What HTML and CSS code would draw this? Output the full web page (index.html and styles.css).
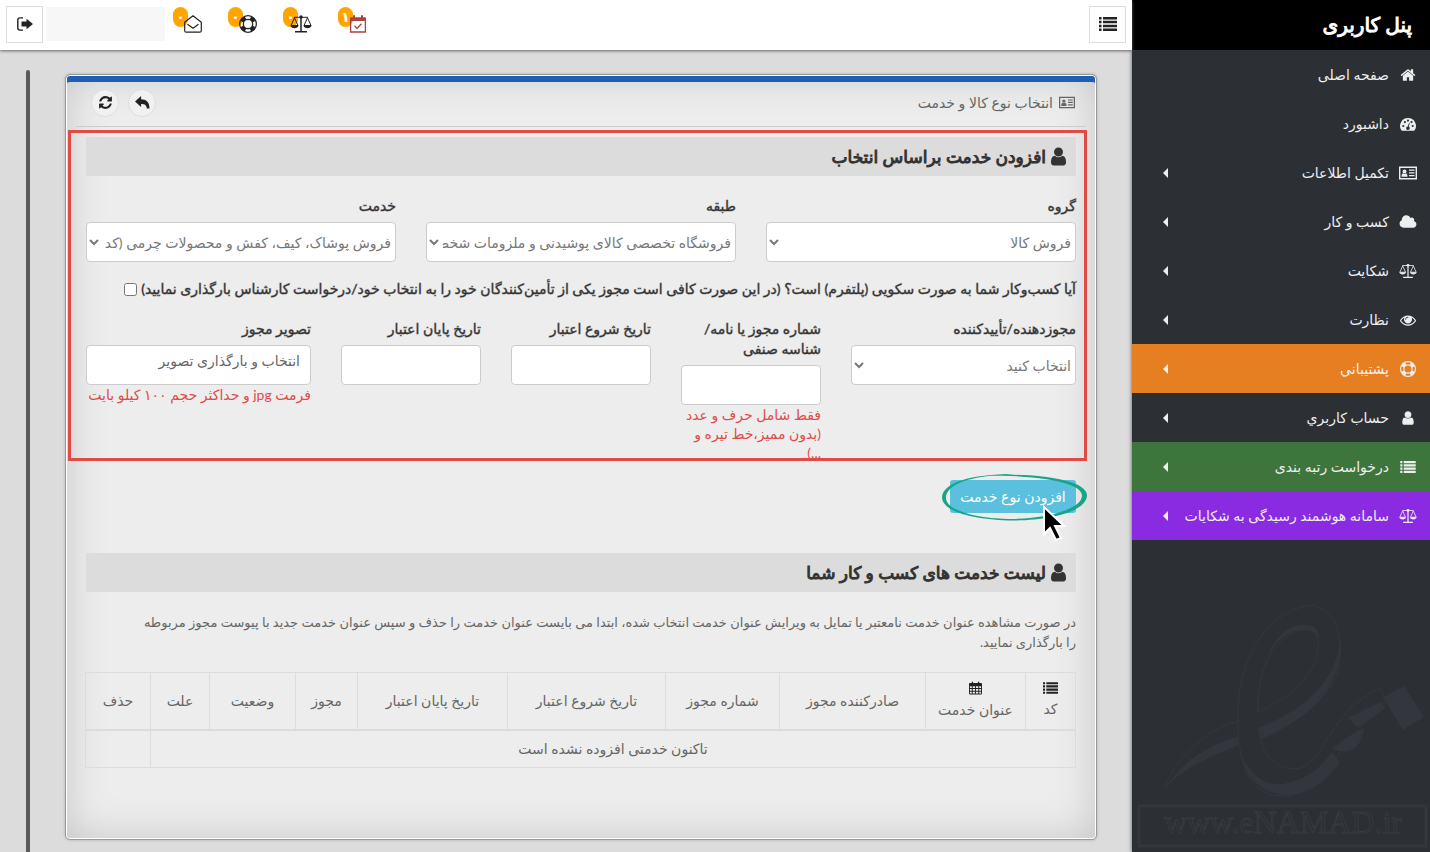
FILE: index.html
```html
<!DOCTYPE html>
<html lang="fa" dir="rtl">
<head>
<meta charset="utf-8">
<title>پنل کاربری</title>
<link rel="stylesheet" href="styles.css">
</head>
<body>
<svg class="sprite" aria-hidden="true">
  <symbol id="home" viewBox="0 0 1792 1792"><path d="M1472 992v480q0 26-19 45t-45 19h-384v-384h-256v384h-384q-26 0-45-19t-19-45v-480q0-1 .5-3t.5-3l575-474 575 474q1 2 1 6zm223-69l-62 74q-8 9-21 11h-3q-13 0-21-7l-692-577-692 577q-12 8-24 7-13-2-21-11l-62-74q-8-10-7-23.5t11-21.5l719-599q32-26 76-26t76 26l244 204v-195q0-14 9-23t23-9h192q14 0 23 9t9 23v408l219 182q10 8 11 21.5t-7 23.5z"/></symbol>
  <symbol id="user" viewBox="0 0 1792 1792"><path d="M1536 1399q0 109-62.5 187t-150.5 78h-854q-88 0-150.5-78t-62.5-187q0-85 8.5-160.5t31.5-152 58.5-131 94-89 134.5-34.5q131 128 313 128t313-128q76 0 134.5 34.5t94 89 58.5 131 31.5 152 8.5 160.5zm-256-887q0 159-112.5 271.5t-271.5 112.5-271.5-112.5-112.5-271.5 112.5-271.5 271.5-112.5 271.5 112.5 112.5 271.5z"/></symbol>
  <symbol id="cloud" viewBox="0 128 2048 1536"><path d="M1984 1152q0 159-112.5 271.5t-271.5 112.5h-1088q-185 0-316.5-131.5t-131.5-316.5q0-132 71-241.5t187-163.5q-2-28-2-43 0-212 150-362t362-150q158 0 286.5 88t187.5 230q70-62 166-62 106 0 181 75t75 181q0 75-41 138 129 30 213 134.5t84 239.5z"/></symbol>
  <symbol id="eye" viewBox="0 0 1792 1792"><path d="M1664 960q-152-236-381-353 61 104 61 225 0 185-131.5 316.5t-316.5 131.5-316.5-131.5-131.5-316.5q0-121 61-225-229 117-381 353 133 205 333.5 326.5t434.5 121.5 434.5-121.5 333.5-326.5zm-720-384q0-20-14-34t-34-14q-125 0-214.5 89.5t-89.5 214.5q0 20 14 34t34 14 34-14 14-34q0-86 61-147t147-61q20 0 34-14t14-34zm848 384q0 34-20 69-140 230-376.5 368.5t-499.5 138.5-499.5-139-376.5-368q-20-35-20-69t20-69q140-229 376.5-368t499.5-139 499.5 139 376.5 368q20 35 20 69z"/></symbol>
  <symbol id="refresh" viewBox="0 0 1792 1792"><path d="M1639 1056q0 5-1 7-64 268-268 434.5t-478 166.5q-146 0-282.5-55t-243.5-157l-129 129q-19 19-45 19t-45-19-19-45v-448q0-26 19-45t45-19h448q26 0 45 19t19 45-19 45l-137 137q71 66 161 102t187 36q134 0 250-65t186-179q11-17 53-117 8-23 30-23h192q13 0 22.5 9.5t9.5 22.5zm25-800v448q0 26-19 45t-45 19h-448q-26 0-45-19t-19-45 19-45l138-138q-148-137-349-137-134 0-250 65t-186 179q-11 17-53 117-8 23-30 23h-199q-13 0-22.5-9.5t-9.5-22.5v-7q65-268 270-434.5t480-166.5q146 0 284 55.5t245 156.5l130-129q19-19 45-19t45 19 19 45z"/></symbol>
  <symbol id="back" viewBox="0 0 16 14"><path d="M6.500 0v3.500c5.500 0 9 3 9 9.800h-3c0-3.500-2-4.800-6-4.800v3.300L0 6z"/></symbol>
  <symbol id="gauge" viewBox="0 0 16 16"><path fill-rule="evenodd" d="M8 2a8 8 0 0 0-6.700 12.300c.2.300.4.400.8.400h11.800c.4 0 .6-.1.8-.4A8 8 0 0 0 8 2zM3.300 8.900a1.100 1.100 0 1 1 0 2.200 1.100 1.100 0 0 1 0-2.200zM4.900 5a1.100 1.100 0 1 1 0 2.200 1.100 1.100 0 0 1 0-2.200zM8 3.500a1.100 1.100 0 1 1 0 2.200 1.100 1.100 0 0 1 0-2.200zM11.500 5a1.100 1.100 0 1 1 0 2.200 1.100 1.100 0 0 1 0-2.200zM12.700 8.900a1.100 1.100 0 1 1 0 2.200 1.100 1.100 0 0 1 0-2.200zM9 7l.8.300-1 3.300a1.800 1.800 0 1 1-1-.2z"/></symbol>
  <symbol id="card" viewBox="0 0 18 14"><path fill="none" stroke="currentColor" stroke-width="1.400" d="M.7 1.200h16.600v11.600H.7z"/><circle cx="5.500" cy="5.400" r="1.900"/><path d="M2.500 10.800c0-2.300.8-3.500 1.700-3.500a2 2 0 0 0 2.600 0c1 0 1.700 1.200 1.700 3.500zM10 3.500h5.500v1.300H10zM10 6.200h5.500v1.300H10zM10 9h5.500v1.300H10zM3.500 12h2v1h-2zM12.500 12h2v1h-2z"/></symbol>
  <symbol id="scales" viewBox="0 0 22 18"><g fill="none" stroke="currentColor" stroke-width="1"><path d="M4 2.300h14M4.500 2.800L1 10.500h7L4.500 2.800zM17.500 2.800L14 10.500h7L17.500 2.800z"/><path stroke-width="1.500" d="M11 2.300v14M5 16.800h12"/></g><circle cx="11" cy="2" r="1.700"/><path d="M.5 10.500h8c-.3 3.500-7.700 3.500-8 0zM13.500 10.500h8c-.3 3.500-7.700 3.500-8 0z"/></symbol>
  <symbol id="ring" viewBox="0 0 18 18"><path fill-rule="evenodd" d="M9 0a9 9 0 1 1 0 18A9 9 0 0 1 9 0zM9 5a4 4 0 1 0 0 8 4 4 0 0 0 0-8zM6 1.900l1.200 2.200a5 5 0 0 1 3.600 0L12 1.900a8 8 0 0 0-6 0zM6 16.100l1.200-2.200a5 5 0 0 0 3.600 0l1.200 2.200a8 8 0 0 1-6 0zM1.900 6l2.200 1.200a5 5 0 0 0 0 3.600L1.900 12a8 8 0 0 1 0-6zM16.100 6l-2.200 1.200a5 5 0 0 1 0 3.600l2.200 1.200a8 8 0 0 0 0-6z"/></symbol>
  <symbol id="list" viewBox="0 0 18 14"><path d="M0 0h2.500v2.500H0zM4 0h14v2.500H4zM0 3.800h2.500v2.500H0zM4 3.800h14v2.500H4zM0 7.700h2.500v2.500H0zM4 7.700h14v2.500H4zM0 11.500h2.500V14H0zM4 11.500h14V14H4z"/></symbol>
  <symbol id="mail" viewBox="0 0 18 18"><path fill="none" stroke="currentColor" stroke-width="1.200" stroke-linejoin="round" d="M.7 7.200L9 .8l8.300 6.400v8.500q0 1.500-1.500 1.500H2.200Q.7 17.200.7 15.700zM3.500 9.300L9 13.200l5.500-3.900"/></symbol>
  <symbol id="agenda" viewBox="0 0 18 18"><path d="M2 2.200h2V.9q0-.9 1-.9t1 .9v1.300h6V.9q0-.9 1-.9t1 .9v1.300h2q1 0 1 1V6H1V3.200q0-1 1-1z"/><path fill="none" stroke="currentColor" stroke-width="1.300" d="M1.600 5v12h14.800V5M5.500 10.800l2.500 2.700 4.500-4.700"/></symbol>
  <symbol id="calendar" viewBox="0 0 14 14"><path fill-rule="evenodd" d="M1 1.500h2V.7q0-.7.700-.7t.7.700v.8h5.200V.7q0-.7.700-.7t.7.700v.8h2q1 0 1 1V13q0 1-1 1H1q-1 0-1-1V2.500q0-1 1-1zM1 5v2h2V5zM4 5v2h2.500V5zM7.500 5v2H10V5zM11 5v2h2V5zM1 8v2h2V8zM4 8v2h2.500V8zM7.500 8v2H10V8zM11 8v2h2V8zM1 11v2h2v-2zM4 11v2h2.500v-2zM7.500 11v2H10v-2zM11 11v2h2v-2z"/></symbol>
  <symbol id="exit" viewBox="0 0 16 14"><path fill="none" stroke="currentColor" stroke-width="1.400" d="M6 .9H3Q.8.900.8 3v8q0 2.100 2.200 2.100h3"/><path d="M4.500 4.500h5V1.700L16 7l-6.500 5.300V9.500h-5z"/></symbol>
</svg>

<div class="app">
  <aside class="sidebar">
    <h1 class="brand">پنل کاربری</h1>
    <nav class="menu">
      <a class="item" href="#"><svg class="ico"><use href="#home"/></svg><span>صفحه اصلی</span></a>
      <a class="item" href="#"><svg class="ico"><use href="#gauge"/></svg><span>داشبورد</span></a>
      <a class="item sub" href="#"><svg class="ico"><use href="#card"/></svg><span>تکمیل اطلاعات</span></a>
      <a class="item sub" href="#"><svg class="ico"><use href="#cloud"/></svg><span>کسب و کار</span></a>
      <a class="item sub" href="#"><svg class="ico"><use href="#scales"/></svg><span>شکایت</span></a>
      <a class="item sub" href="#"><svg class="ico"><use href="#eye"/></svg><span>نظارت</span></a>
      <a class="item sub orange" href="#"><svg class="ico"><use href="#ring"/></svg><span>پشتیباني</span></a>
      <a class="item sub" href="#"><svg class="ico"><use href="#user"/></svg><span>حساب کاربري</span></a>
      <a class="item sub green" href="#"><svg class="ico small"><use href="#list"/></svg><span>درخواست رتبه بندی</span></a>
      <a class="item sub purple" href="#"><svg class="ico"><use href="#scales"/></svg><span>سامانه هوشمند رسیدگی به شکایات</span></a>
    </nav>
    <svg class="watermark" viewBox="0 0 298 262" aria-hidden="true">
      <path class="wm-light" d="M34 198C48 180 76 168 106 155L107 146C76 156 50 170 34 198z"/>
      <path class="wm-light" d="M126 122C124 80 140 44 168 40C176 38 184 42 186 50C188 38 182 35 170 35C142 36 126 76 125 122z"/>
      <path class="wm-light" d="M128 149C172 132 212 100 208 50C204 94 168 122 126 138z"/>
      <path class="wm-light" d="M108 160C114 206 158 214 184 196C196 188 204 178 208 172L200 162C190 176 176 190 150 194C130 196 114 180 108 160z"/>
      <path class="wm-line" d="M108 131C80 136 46 164 32 198C44 184 72 166 106 155"/>
      <path class="wm-line" d="M106 132C104 60 140 20 180 15C206 20 214 52 205 84C196 110 160 136 128 149C134 170 150 182 168 178C196 168 196 122 248 98L254 112L216 128"/>
      <path class="wm-line" d="M126 122C124 70 150 36 184 39C196 76 160 108 126 122M106 132C106 170 116 206 150 206C176 206 196 180 210 160"/>
      <path class="wm-light" d="M251 107L272 96L292 127L271 140zM216 128L248 112L254 118L226 138zM200 158C216 148 220 142 232 138C230 160 214 166 200 158z"/>
      <rect class="wm-box" x="7" y="216" width="287" height="40"/>
      <text class="wm-text" x="151" y="243" text-anchor="middle" direction="ltr">www.eNAMAD.ir</text>
    </svg>
  </aside>

  <div class="page">
    <header class="topbar">
      <button class="square" type="button" aria-label="منو"><svg class="ico-menu"><use href="#list"/></svg></button>
      <div class="notices">
        <a class="notice alert" href="#" aria-label="تقویم"><svg><use href="#agenda"/></svg><b class="badge">۱</b></a>
        <a class="notice" href="#" aria-label="شکایات"><svg class="wide"><use href="#scales"/></svg><b class="badge">۰</b></a>
        <a class="notice" href="#" aria-label="پشتیبانی"><svg><use href="#ring"/></svg><b class="badge">۰</b></a>
        <a class="notice" href="#" aria-label="پیام‌ها"><svg><use href="#mail"/></svg><b class="badge">۰</b></a>
      </div>
      <div class="username"></div>
      <button class="square" type="button" aria-label="خروج"><svg class="ico-exit"><use href="#exit"/></svg></button>
    </header>

    <div class="body">
      <main class="panel">
        <div class="panel-head">
          <svg class="ico-card"><use href="#card"/></svg>
          <span>انتخاب نوع کالا و خدمت</span>
          <div class="tools">
            <button class="round" type="button" aria-label="بازگشت"><svg><use href="#back"/></svg></button>
            <button class="round" type="button" aria-label="بارگذاری مجدد"><svg><use href="#refresh"/></svg></button>
          </div>
        </div>

        <form class="form">
          <h2 class="title"><svg><use href="#user"/></svg>افزودن خدمت براساس انتخاب</h2>
          <div class="grid">
            <div class="field span4"><label for="group">گروه</label><select id="group"><option>فروش کالا</option></select></div>
            <div class="field span4"><label for="floor">طبقه</label><select id="floor"><option>فروشگاه تخصصی کالای پوشیدنی و ملزومات شخصی</option></select></div>
            <div class="field span4"><label for="service">خدمت</label><select id="service"><option>فروش پوشاک، کیف، کفش و محصولات چرمی (کد</option></select></div>
          </div>
          <div class="check">
            <label for="platform">آیا کسب‌وکار شما به صورت سکویی (پلتفرم) است؟ (در این صورت کافی است مجوز یکی از تأمین‌کنندگان خود را به انتخاب خود/درخواست کارشناس بارگذاری نمایید)</label>
            <input id="platform" type="checkbox">
          </div>
          <div class="grid">
            <div class="field span3"><label for="issuer">مجوزدهنده/تأییدکننده</label><select id="issuer"><option>انتخاب کنید</option></select></div>
            <div class="field span2"><label for="number">شماره مجوز یا نامه/شناسه صنفی</label><input id="number" type="text"><p class="hint">فقط شامل حرف و عدد (بدون ممیز،خط تیره و<br>...)</p></div>
            <div class="field span2"><label for="start">تاریخ شروع اعتبار</label><input id="start" type="text"></div>
            <div class="field span2"><label for="end">تاریخ پایان اعتبار</label><input id="end" type="text"></div>
            <div class="field span3"><label for="image">تصویر مجوز</label><button id="image" class="upload" type="button">انتخاب و بارگذاری تصویر</button><p class="hint">فرمت jpg و حداکثر حجم ۱۰۰ کیلو بایت</p></div>
          </div>
        </form>

        <section class="content">
          <div class="action">
            <button class="add" type="button">افزودن نوع خدمت</button>
            <svg class="circle" viewBox="0 0 146 50" aria-hidden="true"><path d="M42 2.500C85-.5 146 5 145 23C143 40 104 48 66 47.500C28 46 0 38 0 24C1 10 28 1 72 1L55 2.500C26 4 5 12 4 24C3 37 32 45 66 46C102 46 139 37 140 23C141 8 88 2 42 2.500z"/></svg>
            <svg class="cursor" viewBox="0 0 26 38" aria-hidden="true"><path d="M3 2v27l6-6 6 12 5-2-6-12h9z"/></svg>
          </div>
          <h2 class="title"><svg><use href="#user"/></svg>لیست خدمت های کسب و کار شما</h2>
          <p class="note">در صورت مشاهده عنوان خدمت نامعتبر یا تمایل به ویرایش عنوان خدمت انتخاب شده، ابتدا می بایست عنوان خدمت را حذف و سپس عنوان خدمت جدید با پیوست مجوز مربوطه<br>را بارگذاری نمایید.</p>
          <table class="table">
            <colgroup><col class="w50"><col class="w100"><col class="w146"><col class="w114"><col class="w158"><col class="w150"><col class="w62"><col class="w86"><col class="w59"><col class="w65"></colgroup>
            <thead><tr>
              <th><svg class="th-list"><use href="#list"/></svg>کد</th>
              <th><svg class="th-cal"><use href="#calendar"/></svg>عنوان خدمت</th>
              <th>صادرکننده مجوز</th><th>شماره مجوز</th><th>تاریخ شروع اعتبار</th><th>تاریخ پایان اعتبار</th><th>مجوز</th><th>وضعیت</th><th>علت</th><th>حذف</th>
            </tr></thead>
            <tbody><tr><td colspan="9">تاکنون خدمتی افزوده نشده است</td><td></td></tr></tbody>
          </table>
        </section>
      </main>
      <div class="scrollbar"></div>
    </div>
  </div>
</div>
</body>
</html>
```
FILE: styles.css
```css
* { box-sizing: border-box; }
body {
  margin: 0;
  font-family: Lato, "Noto Sans", "DejaVu Sans", sans-serif;
  font-size: 14px;
  line-height: 20px;
  color: #666;
  background: #dcdcdc;
}
button, input, select { font: inherit; color: inherit; margin: 0; }
svg { fill: currentColor; flex: none; }
a { text-decoration: none; color: inherit; }
.sprite { position: absolute; width: 0; height: 0; }
.app { display: flex; height: 100vh; overflow: hidden; }

.sidebar {
  width: 298px;
  flex: none;
  display: flex;
  flex-direction: column;
  background: #2c2f34;
  color: #eee;
  box-shadow: 0 0 4px #555;
  overflow: hidden;
}
.brand {
  margin: 0;
  height: 50px;
  padding: 0 18px;
  flex: none;
  background: #000;
  color: #fff;
  font-size: 20px;
  font-weight: normal;
  line-height: 48px;
  -webkit-text-stroke: 1px currentColor;
}
.item { display: flex; align-items: center; gap: 10px; height: 49px; padding: 0 13px; }
.ico { width: 18px; height: 16px; }
.small { height: 12px; }
.sub::after {
  content: "";
  margin-right: auto;
  margin-left: 18px;
  border: 5px solid transparent;
  border-right-color: currentColor;
  border-left-width: 0;
}
.orange { background: #e67e22; }
.green { background: #3e753d; }
.purple { background: #8a2be2; }
.watermark { width: 100%; margin-top: auto; }
.wm-light { fill: #33363c; }
.wm-line { fill: none; stroke: #34373c; stroke-width: 1; }
.wm-box { fill: none; stroke: #34373c; stroke-width: 3; }
.wm-text { font: 32px "Liberation Serif", serif; fill: #2c2f34; stroke: #373a3f; stroke-width: 1; }

.page { flex: 1; min-width: 0; display: flex; flex-direction: column; }
.topbar {
  height: 50px;
  flex: none;
  display: flex;
  align-items: center;
  padding: 0 6px 2px;
  background: #fff;
  box-shadow: 0 1px 3px #666;
}
.square {
  width: 37px;
  height: 37px;
  padding: 0;
  display: flex;
  align-items: center;
  justify-content: center;
  background: #fff;
  border: 1px solid #ddd;
  color: #222;
}
.ico-menu { width: 18px; height: 14px; }
.ico-exit { width: 16px; height: 14px; }
.notices { position: relative; z-index: 0; display: flex; gap: 26px; margin-right: auto; color: #222; }
.notice { position: relative; width: 29px; height: 34px; display: flex; align-items: center; }
.notice svg { width: 18px; height: 18px; }
.notice .wide { width: 22px; }
.alert { color: #a94442; }
.badge {
  position: absolute;
  z-index: -1;
  left: 0;
  top: 0;
  width: 15px;
  height: 20px;
  border-radius: 8px;
  background: #ffa500;
  color: #fff;
  font-size: 14px;
  text-align: center;
}
.username { width: 119px; height: 34px; margin: 0 8px 0 3px; background: #f7f7f7; }

.body { flex: 1; min-height: 0; display: flex; padding: 24px 35px 12px 26px; }
.scrollbar { width: 4px; flex: none; margin: -4px 0 -12px; border-radius: 3px 3px 0 0; background: #5a5a5a; }
.panel {
  flex: 1;
  min-width: 0;
  margin-left: 35px;
  border: 1px solid #999;
  border-radius: 5px;
  background: #ededed;
  box-shadow: inset 0 0 0 1px #fff, inset 0 7px 0 #1f5eb0, inset 0 0 40px #c4c4c4, 0 0 3px #aaa;
}
.panel-head {
  display: flex;
  align-items: center;
  gap: 6px;
  height: 52px;
  padding: 4px 10px 0 15px;
  margin: 0 11px 3px 10px;
  border-bottom: 1px solid #ccc;
}
.ico-card { width: 16px; height: 13px; }
.tools { display: flex; gap: 9px; margin-right: auto; }
.round {
  width: 28px;
  height: 28px;
  padding: 0;
  display: flex;
  align-items: center;
  justify-content: center;
  border: 1px solid #ddd;
  border-radius: 50%;
  background: #f1f1f1;
  color: #222;
}
.round svg { width: 15px; height: 15px; }
.form { margin: 0 9px 0 2px; padding: 4px 8px 0 15px; border: 3px solid #e04b48; }
.title {
  display: flex;
  align-items: center;
  gap: 2px;
  height: 39px;
  margin: 0 0 20px;
  padding: 0 7px;
  background: #dcdcdc;
  color: #333;
  font-size: 17px;
  font-weight: normal;
  -webkit-text-stroke: 1px currentColor;
}
.title svg { width: 21px; height: 21px; }
.grid { display: grid; grid-template-columns: repeat(12, minmax(0, 1fr)); column-gap: 30px; }
.span2 { grid-column: span 2; }
.span3 { grid-column: span 3; }
.span4 { grid-column: span 4; }
.field label, .check label { color: #333; -webkit-text-stroke: 1px rgba(51, 51, 51, 0.4); }
.field label { display: block; margin-bottom: 6px; }
.field select, .field input, .upload {
  display: block;
  width: 100%;
  height: 40px;
  border: 1px solid #ccc;
  border-radius: 4px;
  background-color: #fff;
  color: #777;
}
.field .upload { padding: 0 10px 8px; text-align: right; color: #666; }
.check { display: flex; align-items: center; gap: 4px; height: 20px; margin: 17px 0 20px; white-space: nowrap; }
.check input { width: 13px; height: 13px; }
.hint { margin: 0; height: 53px; line-height: 19px; color: #e04b48; }
.content { padding: 19px 20px 0; }
.action { position: relative; width: 126px; height: 33px; margin-bottom: 40px; }
.add { width: 100%; height: 100%; padding: 0; border: 0; border-radius: 3px; background: #5bc0de; color: #fff; white-space: nowrap; }
.circle { position: absolute; left: -8px; top: -7px; width: 146px; height: 50px; fill: #17a589; }
.cursor { position: absolute; left: 91px; top: 25px; width: 26px; height: 38px; fill: #000; stroke: #fff; stroke-width: 2; }
.note { margin: 0 0 20px; font-size: 13px; }
.table { width: 100%; table-layout: fixed; border-collapse: collapse; text-align: center; white-space: nowrap; }
.table th, .table td { border: 1px solid #dcdcdc; padding: 8px 0; font-weight: inherit; }
.table th { height: 57px; border-bottom-width: 2px; }
.table td { height: 38px; }
.table th svg { display: block; margin: 0 auto 5px; color: #222; }
.th-list { width: 15px; height: 12px; }
.th-cal { width: 13px; height: 14px; }
.w50 { width: 50px; }
.w100 { width: 100px; }
.w146 { width: 146px; }
.w114 { width: 114px; }
.w158 { width: 158px; }
.w150 { width: 150px; }
.w62 { width: 62px; }
.w86 { width: 86px; }
.w59 { width: 59px; }
.w65 { width: 65px; }
```
